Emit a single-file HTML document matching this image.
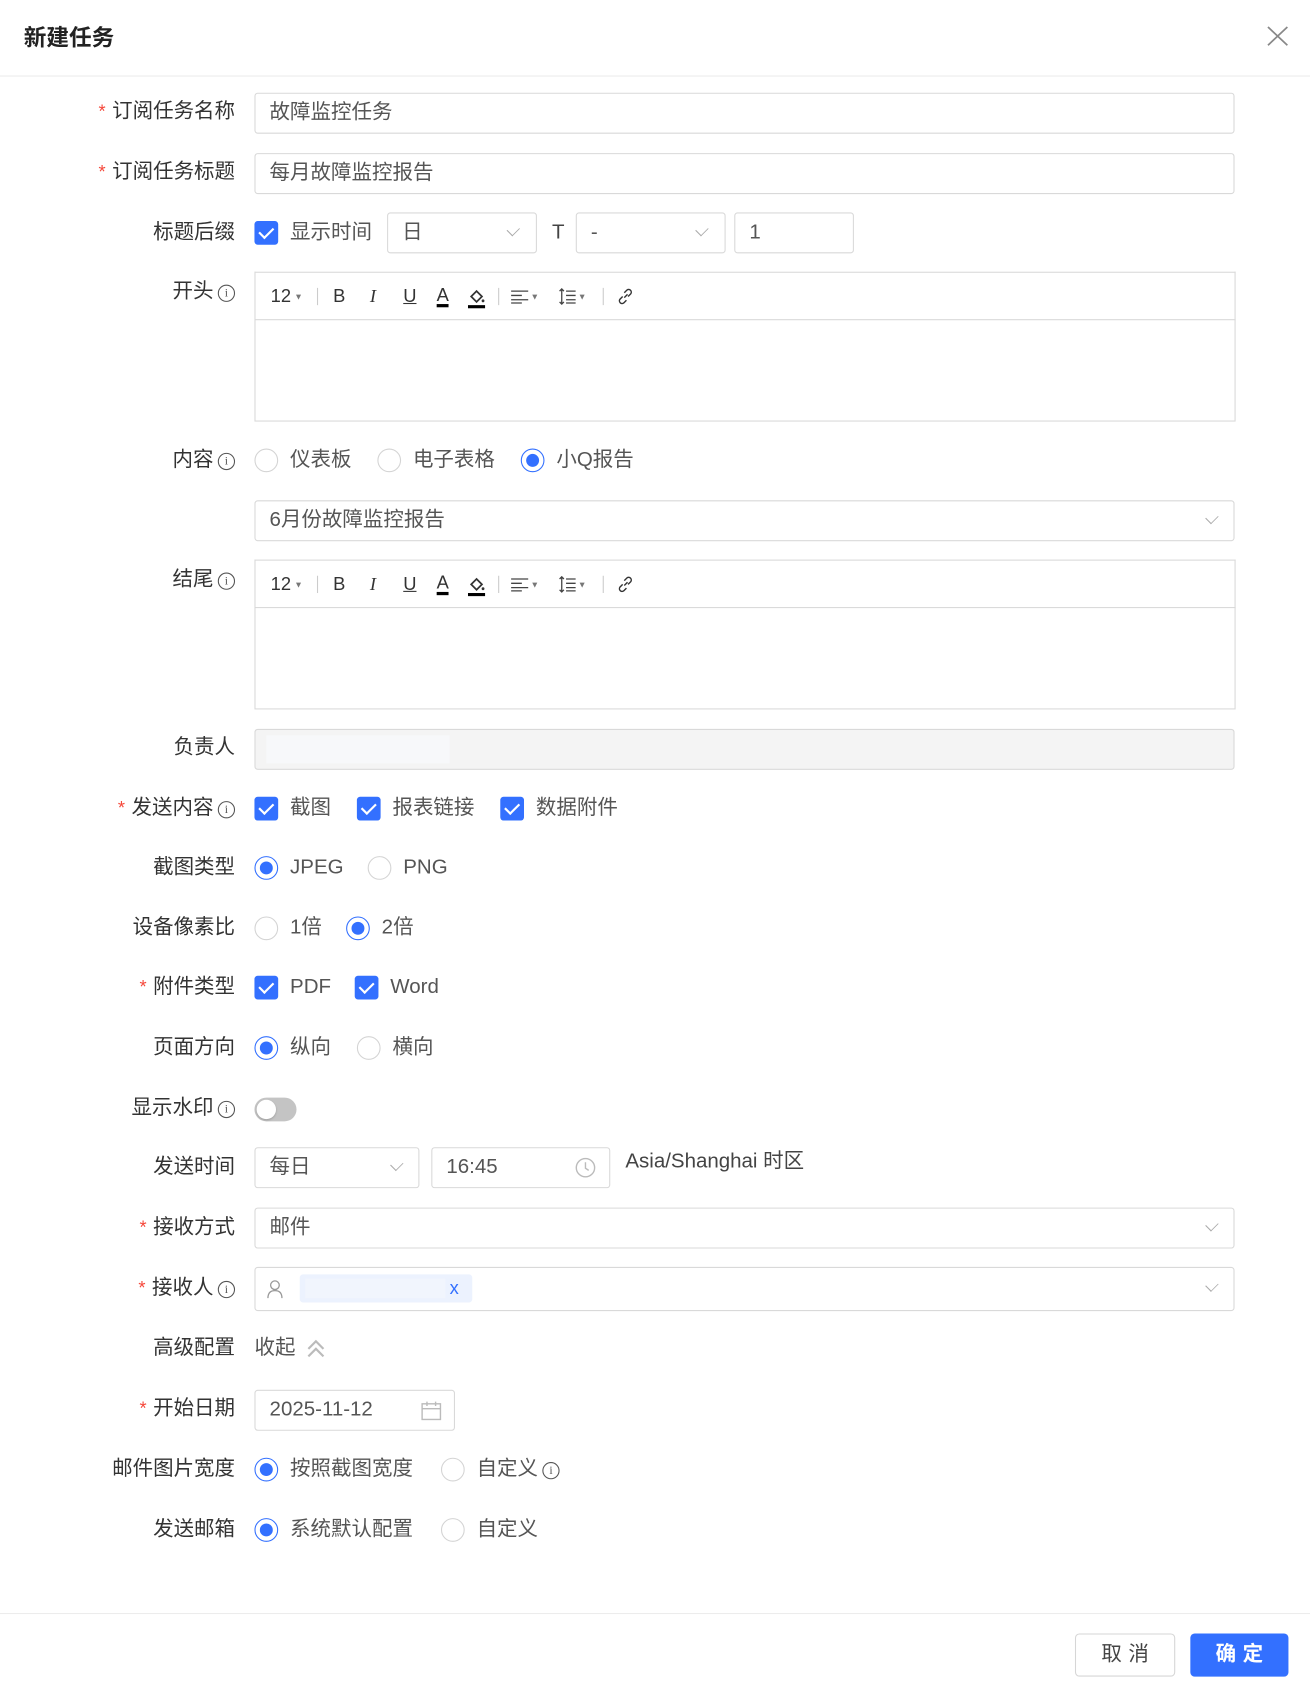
<!DOCTYPE html>
<html><head><meta charset="utf-8">
<style>
html,body{margin:0;padding:0;background:#fff;}
body{width:1310px;height:1692px;overflow:hidden;}
#w{position:absolute;left:0;top:0;width:1215px;height:1569px;transform:scale(1.0782);transform-origin:0 0;font-family:"Liberation Sans","Noto Sans CJK SC",sans-serif;color:#333;}
.a{position:absolute;}
.lbl{position:absolute;right:997px;height:38px;line-height:38px;font-size:19px;color:#333;white-space:nowrap;}
.req{color:#f5483b;margin-right:6px;font-size:17px;}
.inp{position:absolute;left:236px;width:909px;height:38px;border:1px solid #d9d9d9;border-radius:3px;font-size:19px;color:#555;line-height:36px;padding-left:13px;box-sizing:border-box;}
.info{display:inline-block;width:14px;height:14px;border:1.3px solid #555;border-radius:50%;font-size:11px;line-height:14px;text-align:center;vertical-align:1px;margin-left:4px;color:#555;font-family:"Liberation Serif",serif;}
.cb{position:absolute;width:22px;height:22px;background:#3370ff;border-radius:3px;}
.cb:after{content:"";position:absolute;left:7px;top:3px;width:6px;height:11px;border:solid #fff;border-width:0 2.5px 2.5px 0;transform:rotate(45deg);}
.rd{position:absolute;width:20px;height:20px;border:1px solid #d4d4d4;border-radius:50%;}
.rd.on{border-color:#3370ff;}
.rd.on:after{content:"";position:absolute;left:4px;top:4px;width:12px;height:12px;border-radius:50%;background:#3370ff;}
.t{position:absolute;font-size:19px;color:#555;line-height:22px;white-space:nowrap;}
.chev{position:absolute;width:9px;height:9px;border:solid #aaa;border-width:0 1.3px 1.3px 0;transform:rotate(45deg) scaleX(.75);}
.tb{position:absolute;left:236px;width:908px;height:44px;border:1px solid #d9d9d9;border-bottom:none;}
.ed{position:absolute;left:236px;width:908px;border:1px solid #d9d9d9;}
.tbi{position:absolute;top:12px;font-size:17px;color:#333;line-height:20px;}
.sep{position:absolute;top:14px;width:1px;height:16px;background:#ccc;}
.dd{font-size:8px;color:#777;vertical-align:2px;margin-left:3px;}
</style></head><body><div id="w">
<div class="a" style="left:22px;top:19px;font-size:21px;font-weight:bold;color:#222;">新建任务</div>
<svg class="a" style="left:1175px;top:24px" width="20" height="19"><path d="M1 1L19 18M19 1L1 18" stroke="#888" stroke-width="1.6"/></svg>
<div class="a" style="left:0;top:70px;width:1215px;height:1px;background:#ececec"></div>

<div class="lbl" style="top:85px"><span class="req">*</span>订阅任务名称</div>
<div class="inp" style="top:86px">故障监控任务</div>
<div class="lbl" style="top:141px"><span class="req">*</span>订阅任务标题</div>
<div class="inp" style="top:142px">每月故障监控报告</div>

<div class="lbl" style="top:197px">标题后缀</div>
<div class="cb" style="left:236px;top:205px"></div>
<div class="t" style="left:269px;top:205px">显示时间</div>
<div class="inp" style="top:197px;left:359px;width:139px">日</div>
<div class="chev" style="left:471px;top:208px"></div>
<div class="t" style="left:512px;top:205px;color:#444">T</div>
<div class="inp" style="top:197px;left:534px;width:139px">-</div>
<div class="chev" style="left:646px;top:208px"></div>
<div class="inp" style="top:197px;left:681px;width:111px">1</div>

<div class="lbl" style="top:252px">开头<span class="info">i</span></div>
<div class="tb" style="top:252px" id="tb1"></div>
<div class="ed" style="top:296px;height:93px"></div>

<div class="lbl" style="top:408px">内容<span class="info">i</span></div>
<div class="rd" style="left:236px;top:416px"></div><div class="t" style="left:269px;top:416px">仪表板</div>
<div class="rd" style="left:350px;top:416px"></div><div class="t" style="left:383px;top:416px">电子表格</div>
<div class="rd on" style="left:483px;top:416px"></div><div class="t" style="left:516px;top:416px">小Q报告</div>
<div class="inp" style="top:464px">6月份故障监控报告</div>
<div class="chev" style="left:1119px;top:475px"></div>

<div class="lbl" style="top:519px">结尾<span class="info">i</span></div>
<div class="tb" style="top:519px" id="tb2"></div>
<div class="ed" style="top:563px;height:93px"></div>

<div class="lbl" style="top:675px">负责人</div>
<div class="inp" style="top:676px;background:#f4f4f4"><div class="a" style="left:10px;top:5px;width:170px;height:26px;background:#f7f8fa"></div></div>

<div class="lbl" style="top:731px"><span class="req">*</span>发送内容<span class="info">i</span></div>
<div class="cb" style="left:236px;top:739px"></div><div class="t" style="left:269px;top:739px">截图</div>
<div class="cb" style="left:331px;top:739px"></div><div class="t" style="left:364px;top:739px">报表链接</div>
<div class="cb" style="left:464px;top:739px"></div><div class="t" style="left:497px;top:739px">数据附件</div>

<div class="lbl" style="top:786px">截图类型</div>
<div class="rd on" style="left:236px;top:794px"></div><div class="t" style="left:269px;top:794px">JPEG</div>
<div class="rd" style="left:341px;top:794px"></div><div class="t" style="left:374px;top:794px">PNG</div>

<div class="lbl" style="top:842px">设备像素比</div>
<div class="rd" style="left:236px;top:850px"></div><div class="t" style="left:269px;top:850px">1倍</div>
<div class="rd on" style="left:321px;top:850px"></div><div class="t" style="left:354px;top:850px">2倍</div>

<div class="lbl" style="top:897px"><span class="req">*</span>附件类型</div>
<div class="cb" style="left:236px;top:905px"></div><div class="t" style="left:269px;top:905px">PDF</div>
<div class="cb" style="left:329px;top:905px"></div><div class="t" style="left:362px;top:905px">Word</div>

<div class="lbl" style="top:953px">页面方向</div>
<div class="rd on" style="left:236px;top:961px"></div><div class="t" style="left:269px;top:961px">纵向</div>
<div class="rd" style="left:331px;top:961px"></div><div class="t" style="left:364px;top:961px">横向</div>

<div class="lbl" style="top:1009px">显示水印<span class="info">i</span></div>
<div class="a" style="left:236px;top:1018px;width:39px;height:22px;border-radius:11px;background:#c4c4c4"></div>
<div class="a" style="left:238px;top:1020px;width:18px;height:18px;border-radius:50%;background:#fff;box-shadow:0 1px 2px rgba(0,0,0,.2)"></div>

<div class="lbl" style="top:1064px">发送时间</div>
<div class="inp" style="top:1064px;width:153px">每日</div>
<div class="chev" style="left:363px;top:1075px"></div>
<div class="inp" style="top:1064px;left:400px;width:166px">16:45</div>
<svg class="a" style="left:533px;top:1073px" width="20" height="20"><circle cx="10" cy="10" r="8.5" fill="none" stroke="#bbb" stroke-width="1.3"/><path d="M10 5V10.5L13 12.5" fill="none" stroke="#bbb" stroke-width="1.3"/></svg>
<div class="t" style="left:580px;top:1067px;color:#444">Asia/Shanghai 时区</div>

<div class="lbl" style="top:1120px"><span class="req">*</span>接收方式</div>
<div class="inp" style="top:1120px">邮件</div>
<div class="chev" style="left:1119px;top:1131px"></div>

<div class="lbl" style="top:1176px"><span class="req">*</span>接收人<span class="info">i</span></div>
<div class="inp" style="top:1175px;height:41px"></div>
<svg class="a" style="left:247px;top:1186px" width="16" height="20"><circle cx="8" cy="6" r="4" fill="none" stroke="#999" stroke-width="1.2"/><path d="M1.5 18C1.5 13 4 11 8 11S14.5 13 14.5 18" fill="none" stroke="#999" stroke-width="1.2"/></svg>
<div class="a" style="left:278px;top:1182px;width:160px;height:26px;background:#ecf2fe;border-radius:3px"></div>
<div class="a" style="left:283px;top:1186px;width:130px;height:18px;background:#f1f5fd"></div>
<div class="t" style="left:417px;top:1184px;color:#3370ff;font-size:17px">x</div>
<div class="chev" style="left:1119px;top:1187px"></div>

<div class="lbl" style="top:1232px">高级配置</div>
<div class="t" style="left:236px;top:1240px">收起</div>
<svg class="a" style="left:283px;top:1241px" width="20" height="20"><path d="M3 10L10 3L17 10M3 17L10 10L17 17" fill="none" stroke="#bbb" stroke-width="2"/></svg>

<div class="lbl" style="top:1288px"><span class="req">*</span>开始日期</div>
<div class="inp" style="top:1289px;width:186px">2025-11-12</div>
<svg class="a" style="left:390px;top:1299px" width="20" height="19"><rect x="1.5" y="3" width="17" height="14.5" fill="none" stroke="#bbb" stroke-width="1.3"/><path d="M1.5 7.5H18.5M6 1V5M14 1V5" stroke="#bbb" stroke-width="1.3"/></svg>

<div class="lbl" style="top:1344px">邮件图片宽度</div>
<div class="rd on" style="left:236px;top:1352px"></div><div class="t" style="left:269px;top:1352px">按照截图宽度</div>
<div class="rd" style="left:409px;top:1352px"></div><div class="t" style="left:442px;top:1352px">自定义<span class="info">i</span></div>

<div class="lbl" style="top:1400px">发送邮箱</div>
<div class="rd on" style="left:236px;top:1408px"></div><div class="t" style="left:269px;top:1408px">系统默认配置</div>
<div class="rd" style="left:409px;top:1408px"></div><div class="t" style="left:442px;top:1408px">自定义</div>

<div class="a" style="left:0;top:1496px;width:1215px;height:1px;background:#ececec"></div>
<div class="a" style="left:997px;top:1515px;width:91px;height:38px;border:1px solid #d6d6d6;border-radius:4px;text-align:center;line-height:38px;font-size:19px;color:#444;letter-spacing:6px;text-indent:6px">取消</div>
<div class="a" style="left:1104px;top:1515px;width:91px;height:40px;background:#3370ff;border-radius:4px;text-align:center;line-height:40px;font-size:19px;color:#fff;font-weight:bold;letter-spacing:6px;text-indent:6px">确定</div>
</div>
<script>
var tb='<div class="tbi" style="left:14px">12<span class="dd">▼</span></div><div class="sep" style="left:57px"></div>'+
'<div class="tbi" style="left:72px">B</div>'+
'<div class="tbi" style="left:106px;font-family:\'Liberation Serif\',serif;font-style:italic">I</div>'+
'<div class="tbi" style="left:137px;text-decoration:underline">U</div>'+
'<div class="tbi" style="left:168px;border-bottom:3px solid #000;line-height:17px">A</div>'+
'<svg class="a" style="left:197px;top:13px" width="16" height="20"><path d="M3 9L8 4L13 9L8 14Z" fill="none" stroke="#333" stroke-width="1.6"/><circle cx="14" cy="13" r="1.3" fill="#333"/><rect x="0" y="17" width="16" height="3" fill="#000"/></svg>'+
'<div class="sep" style="left:225px"></div>'+
'<svg class="a" style="left:237px;top:15px" width="16" height="14"><path d="M0 2H16M0 6H10M0 10H16M0 13H10" stroke="#444" stroke-width="1.2"/></svg><div class="tbi" style="left:252px"><span class="dd">▼</span></div>'+
'<svg class="a" style="left:281px;top:14px" width="16" height="16"><path d="M3 1V15M1 3L3 1L5 3M1 13L3 15L5 13M7 3H16M7 7H16M7 11H16M7 14H16" fill="none" stroke="#444" stroke-width="1.2"/></svg><div class="tbi" style="left:296px"><span class="dd">▼</span></div>'+
'<div class="sep" style="left:322px"></div>'+
'<svg class="a" style="left:335px;top:14px" width="16" height="16"><path d="M7 9L10 6M5.5 8L3 10.5A2.5 2.5 0 0 0 6.5 14L9 11.5M10.5 8L13 5.5A2.5 2.5 0 0 0 9.5 2L7 4.5" fill="none" stroke="#333" stroke-width="1.3"/></svg>';
document.getElementById('tb1').innerHTML=tb;document.getElementById('tb2').innerHTML=tb;
</script>
</body></html>
